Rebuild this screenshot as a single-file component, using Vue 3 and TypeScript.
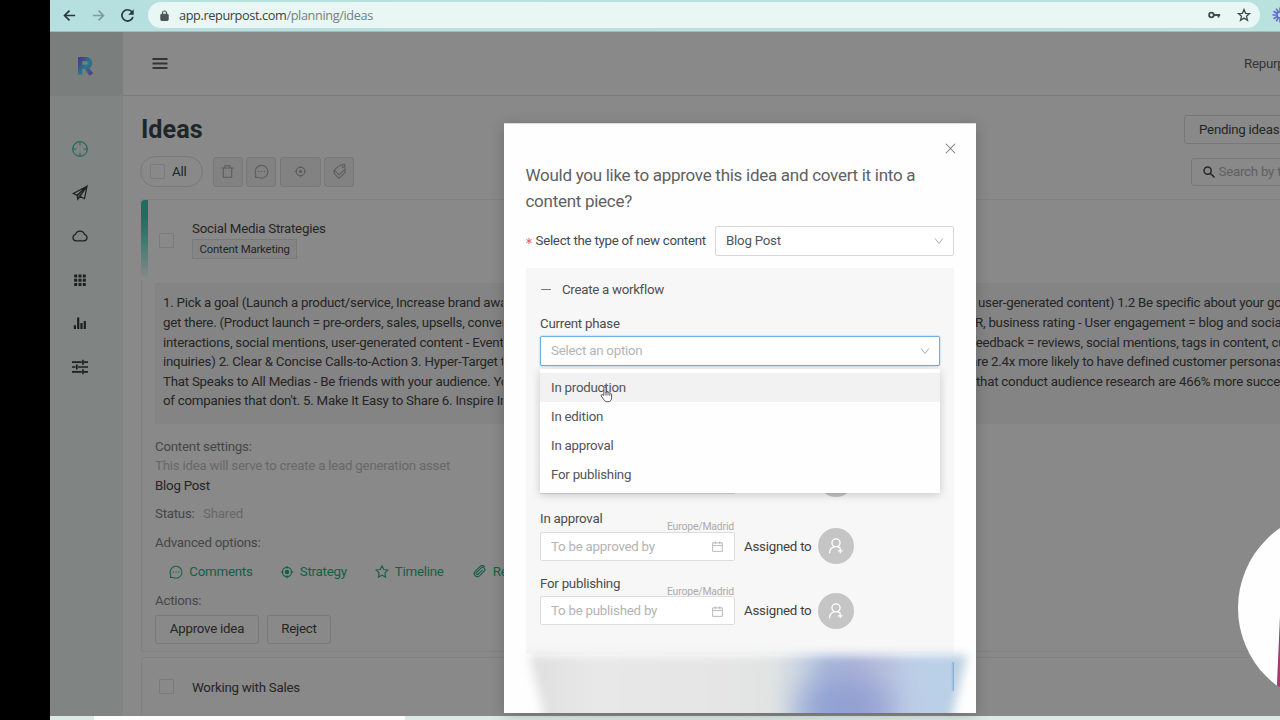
<script setup lang="ts">
interface Line { left: string; right: string; offset: number }

const lines: Line[] = [
  { left: '1. Pick a goal (Launch a product/service, Increase brand awareness', right: 'user-generated content) 1.2 Be specific about your goals', offset: 978 },
  { left: 'get there. (Product launch = pre-orders, sales, upsells, conversions', right: 'R, business rating - User engagement = blog and social media', offset: 975 },
  { left: 'interactions, social mentions, user-generated content - Event leads', right: 'feedback = reviews, social mentions, tags in content, customer', offset: 971.5 },
  { left: 'inquiries) 2. Clear & Concise Calls-to-Action 3. Hyper-Target the', right: 'are 2.4x more likely to have defined customer personas', offset: 970 },
  { left: 'That Speaks to All Medias - Be friends with your audience. You', right: 'that conduct audience research are 466% more successful', offset: 976 },
  { left: "of companies that don't. 5. Make It Easy to Share 6. Inspire Interaction", right: '', offset: 976 },
]
const options: string[] = ['In production', 'In edition', 'In approval', 'For publishing']
const phases = [
  { name: 'In approval', hint: 'To be approved by' },
  { name: 'For publishing', hint: 'To be published by' },
]
</script>

<template>
  <div class="screen">
    <header class="browser">
      <svg class="nav-icon" viewBox="0 0 16 16"><path d="M14 8H3M8 2.7 2.7 8 8 13.3" /></svg>
      <svg class="nav-icon faded" viewBox="0 0 16 16"><path d="M2 8h11M8 2.7 13.3 8 8 13.3" /></svg>
      <svg class="nav-icon" viewBox="0 0 16 16"><path d="M13.8 9.6A6 6 0 1 1 12.8 4.200" /><path class="solid" d="M14.600 1.200v6H8.800z" /></svg>
      <div class="address">
        <svg class="lock" viewBox="0 0 10 12"><rect x="1" y="4.6" width="8" height="6.8" rx="1" /><path d="M2.8 5V3.2a2.2 2.2 0 0 1 4.4 0V5" /></svg>
        <span class="url">app.repurpost.com<i>/planning/ideas</i></span>
        <svg class="key" viewBox="0 0 14 8"><circle cx="3.7" cy="4" r="2.5" /><path d="M6.3 4h6.8M11.3 4v2.6" /></svg>
        <svg class="bookmark" viewBox="0 0 14 14"><path d="m7 1.500 1.600 3.800 4 .3-3.100 2.700 1 4L7 10.100l-3.500 2.200 1-4L1.400 5.600l4-.3z" /></svg>
      </div>
      <svg class="extension" viewBox="0 0 16 16"><g><path v-for="n in 12" :key="n" d="M8 .5v4" :transform="`rotate(${n * 30} 8 8)`" /><circle cx="8" cy="8" r="3" /></g></svg>
    </header>

    <div class="app">
      <aside class="sidebar">
        <div class="brand">
          <svg viewBox="0 0 18 20">
            <defs><linearGradient id="brand" x1="0" y1="0" x2="1" y2="1"><stop offset="0" stop-color="#493d85" /><stop offset=".5" stop-color="#257d88" /><stop offset="1" stop-color="#55378a" /></linearGradient></defs>
            <path d="M3.200 18.700V3.200H9.300a3.700 3.700 0 0 1 0 7.600H3.200M8.300 10.500l6 8" fill="none" stroke="url(#brand)" stroke-width="4.300" />
          </svg>
        </div>
        <nav class="menu">
          <svg class="green" viewBox="0 0 16 16"><circle cx="8" cy="8" r="7.300" /><path d="M8 .7v3.600M8 11.700v3.600M.7 8h3.600M11.700 8h3.600" /></svg>
          <svg viewBox="0 0 16 16"><path d="M15 1.200 1.300 8.500l3.800 1.800L15 1.200l-2.500 12.500-4.600-2.400L15 1.200 5.100 10.300l.6 4 2.200-3" /><path class="fill" d="m5.100 10.300.5 4 2.200-3L15 1.200z" opacity=".5" /></svg>
          <svg viewBox="0 0 16 16"><path d="M4 12.800a3.200 3.200 0 0 1-.6-6.300A4.800 4.800 0 0 1 12.600 6.500a3.200 3.200 0 0 1-.6 6.300z" /></svg>
          <svg class="fill" viewBox="0 0 16 16"><path d="M2.200 2.500h3v3h-3zm4.300 0h3v3h-3zm4.300 0h3v3h-3zM2.200 6.700h3v3h-3zm4.300 0h3v3h-3zm4.300 0h3v3h-3zM2.200 10.900h3v3h-3zm4.300 0h3v3h-3zm4.300 0h3v3h-3z" /></svg>
          <svg class="fill" viewBox="0 0 16 16"><path d="M1.800 10.300h2.200v3.700H1.800zM5.100 2.600h2.200V14H5.100zM8.400 8h2.200v6H8.400zM11.700 6h2.200v8h-2.200z" /></svg>
          <svg class="sliders" viewBox="0 0 16 16"><path d="M0 3.200h9.800M12 3.200h4M0 8h3.500M6 8h10M0 12.800h9.800M12 12.800h4M11 .7v5M4.800 5.500v5M11 10.300v5" /></svg>
        </nav>
      </aside>

      <main class="main">
        <div class="topbar">
          <svg class="burger" viewBox="0 0 16 12"><path d="M.5 1h15M.5 5.500h15M.5 10h15" /></svg>
          <span class="account">Repurpost</span>
        </div>
        <div class="title-row">
          <h1>Ideas</h1>
          <button class="pending">Pending ideas</button>
        </div>
        <div class="toolbar">
          <label class="all"><span class="check"></span>All</label>
          <span class="tool trash"><svg viewBox="0 0 16 16"><path d="M1.500 4.200h13M3.500 4.200v10h9v-10M5.300 4V1.800h5.400V4" /></svg></span>
          <span class="tool chat"><svg viewBox="0 0 16 16"><path d="M1.800 14.300v-3.400A6.800 6.800 0 1 1 5 14.300z" /><path d="M4.200 8h1.300M7.400 8h1.300M10.600 8h1.300" /></svg></span>
          <span class="tool wide"><svg viewBox="0 0 16 16"><circle cx="8" cy="8" r="4.600" /><path d="M8 2v2M8 12v2M2 8h2M12 8h2" /><circle class="fill" cx="8" cy="8" r="1.700" /></svg></span>
          <span class="tool"><svg viewBox="0 0 16 16"><path d="m8.500 1.300 5-.8.500 5-6.500 6-5.200-5zM2.300 7v3.200l5.200 5 6.500-6V6" /><circle cx="11.500" cy="3.300" r=".5" /></svg></span>
          <div class="search"><svg viewBox="0 0 13 13"><circle cx="5" cy="5" r="3.900" /><path d="m8 8 4.500 4.500" /></svg><span>Search by title</span></div>
        </div>

        <section class="card">
          <div class="card-head">
            <span class="check"></span>
            <div class="heading"><div class="idea">Social Media Strategies</div><span class="tag">Content Marketing</span></div>
          </div>
          <div class="description">
            <div v-for="line in lines" :key="line.left" class="line">
              <span class="left">{{ line.left }}</span>
              <span class="right" :style="{ marginLeft: `${line.offset - 503}px` }">{{ line.right }}</span>
            </div>
          </div>
          <div class="settings">
            <div class="soft">Content settings:</div>
            <div class="muted">This idea will serve to create a lead generation asset</div>
            <div>Blog Post</div>
          </div>
          <div class="status"><span class="soft">Status:</span><span class="muted">Shared</span></div>
          <div class="advanced soft">Advanced options:</div>
          <div class="links">
            <span class="link comments"><svg viewBox="0 0 16 16"><path d="M1.800 14.300v-3.400A6.800 6.800 0 1 1 5 14.300z" /><path d="M4.200 8h1.300M7.400 8h1.300M10.600 8h1.300" /></svg>Comments</span>
            <span class="link strategy"><svg viewBox="0 0 16 16"><circle cx="8" cy="8" r="5.300" /><path d="M8 1v3M8 12v3M1 8h3M12 8h3" /><circle class="fill" cx="8" cy="8" r="2.600" /></svg>Strategy</span>
            <span class="link timeline"><svg viewBox="0 0 16 16"><path d="m8 .8 2 4.400 4.700.6-3.400 3.300.8 4.900L8 11.600 3.900 14l.8-4.900-3.400-3.300L6 5.200z" /></svg>Timeline</span>
            <span class="link related"><svg viewBox="0 0 16 16"><path d="m11 5.500-5 5a1.300 1.300 0 0 1-2-1.800l5.200-5.200a2.500 2.500 0 0 1 3.600 3.500L7.500 12.300a3.500 3.500 0 0 1-5-5L7.700 2.100a4.300 4.300 0 0 1 5.800 0" /></svg>Related</span>
          </div>
          <div class="actions-label soft">Actions:</div>
          <div class="actions"><button class="approve">Approve idea</button><button class="reject">Reject</button></div>
        </section>
        <section class="card next"><span class="check"></span><span>Working with Sales</span></section>
      </main>
    </div>
    <footer class="strip"><span></span></footer>

    <div class="camera"><i></i></div>

    <div class="modal">
      <svg class="close" viewBox="0 0 12 12"><path d="m1 .8 10 10.400M11 .8 1 11.200" /></svg>
      <h2>Would you like to approve this idea and covert it into a<br />content piece?</h2>
      <div class="type-row">
        <svg class="star" viewBox="0 0 6 6"><path d="M3 0v6M.4 1.500l5.200 3M5.600 1.500l-5.200 3" /></svg><label>Select the type of new content</label>
        <div class="select type-select">Blog Post<svg class="chevron" viewBox="0 0 10 10"><path d="m1 2.500 4 5 4-5" /></svg></div>
      </div>
      <div class="workflow">
        <div class="workflow-head"><i></i>Create a workflow</div>
        <div class="label">Current phase</div>
        <div class="select phase-select"><span>Select an option</span><svg class="chevron" viewBox="0 0 10 10"><path d="m1 2.500 4 5 4-5" /></svg></div>
        <div class="covered"><span class="covered-input"></span><span class="avatar"></span></div>
        <div v-for="phase in phases" :key="phase.name" class="phase">
          <div class="phase-top"><span>{{ phase.name }}</span><small>Europe/Madrid</small></div>
          <div class="phase-row">
            <div class="date">{{ phase.hint }}<svg viewBox="0 0 12 12"><path d="M.7 2h10.600v9.300H.7zM.7 5h10.600M3.500.5v3M8.500.5v3" /></svg></div>
            <span class="assigned">Assigned to</span>
            <span class="avatar"><svg viewBox="0 0 20 20"><circle cx="10" cy="6.500" r="4.500" /><path d="M2.800 18c0-4 2-6 5-7M12 11c1.200.3 2 .7 2.800 1.400M14.800 12.700v5.400M12 15.400h5.500" /></svg></span>
          </div>
        </div>
      </div>
      <div class="dropdown">
        <div v-for="(option, i) in options" :key="option" class="option" :class="{ active: i === 0 }">{{ option }}</div>
      </div>
    </div>
    <div class="frost"><div class="soften"><div class="haze"></div></div><div class="glow"></div><i></i></div>
    <svg class="cursor" viewBox="0 0 14 18"><path d="M4.200 10V2.200c0-1.800 2.300-1.800 2.300 0v5-.7c.8-.8 2-.4 2.100.5.8-.6 1.900-.2 2 .8.900-.4 1.900.1 1.900 1.100v3.500c0 2.800-1.400 4.400-3.900 4.400-2.500 0-3.500-.8-4.600-2.500L1.300 10.600c-.6-1.100.8-2 1.700-1.200z" /><path d="M6.500 7v3M8.600 7.500V10M10.600 8.300v2" /></svg>
  </div>
</template>

<style>
body { margin: 0; overflow: hidden; }
</style>

<style scoped>
* { box-sizing: border-box; }
.screen { position: relative; width: 1280px; height: 720px; overflow: hidden; background: #000; padding-left: 50px; font: 13.300px/20px Roboto, sans-serif; letter-spacing: -0.240px; color: #252525; }
svg { display: block; flex: none; fill: none; stroke: currentColor; overflow: visible; }
button { font: inherit; letter-spacing: inherit; color: inherit; background: none; padding: 0; }
.browser { height: 32px; background: linear-gradient(90deg, #b6dfdf, #b9e1de); display: flex; align-items: center; padding: 0 0 1px 12px; color: #26383a; border-bottom: 1px solid #9fbdbc; }
.nav-icon { width: 15px; height: 15px; margin-right: 14px; stroke-width: 1.8; }
.nav-icon.faded { color: #809b9b; }
.nav-icon .solid { fill: currentColor; stroke: none; }
.address { flex: none; height: 26px; width: 1112px; margin-left: -1px; padding: 0 9.500px 0 12px; border-radius: 13px; background: #e8f6f4; display: flex; align-items: center; }
.lock { width: 9px; height: 11px; color: #4b5656; stroke-width: 1.3; }
.lock rect { fill: currentColor; }
.url { margin-left: 10px; flex: 1; font: 12.700px/20px "Open Sans", sans-serif; letter-spacing: -0.370px; color: #384242; }
.url i { font-style: normal; color: #758180; }
.key { width: 13px; height: 8px; margin-right: 16px; stroke-width: 2; color: #414d4d; }
.bookmark { width: 14px; height: 14px; stroke-width: 1.3; color: #414d4d; }
.extension { width: 16px; height: 16px; margin-left: 12px; color: #5b64d4; stroke-width: 1.5; }
.app { height: 684px; display: flex; background: #898989; overflow: hidden; }
.sidebar { width: 73px; flex: none; background: #808584; }
.brand { height: 64px; padding: 24px 0 0 27px; background: #7a7f7d; }
.brand svg { width: 18px; height: 20px; }
.menu { padding: 45px 0 0 22px; display: flex; flex-direction: column; gap: 27.600px; color: #1c2120; }
.menu svg { width: 16px; height: 16px; stroke-width: 1.2; }
.menu .green { color: #23695a; }
.fill { fill: currentColor; stroke: none; }
.menu .sliders { stroke-width: 1.7; }
.main { flex: none; width: 1157px; overflow: hidden; }
.topbar { height: 64px; border-bottom: 1px solid #7b7b7b; display: flex; align-items: center; padding-left: 29px; color: #343434; }
.burger { width: 16px; height: 12px; stroke-width: 2; }
.account { margin-left: 1076px; white-space: nowrap; }
.title-row { height: 60px; padding: 19px 0 0 18px; display: flex; justify-content: space-between; }
h1 { margin: 0; font: 700 25.200px/29px Roboto, sans-serif; letter-spacing: 0; color: #1e262c; }
.pending { width: 130px; height: 29px; margin-right: -34px; padding-left: 14px; text-align: left; white-space: nowrap; border: 1px solid #777; border-radius: 3px; }
.toolbar { display: flex; height: 31px; align-items: center; padding-left: 17px; }
.toolbar > * { flex: none; }
.all { width: 63px; height: 31px; border: 1px solid #797979; border-radius: 16px; display: flex; align-items: center; gap: 7px; padding-left: 9px; margin-right: 9.500px; }
.check { width: 15px; height: 15px; border: 1px solid #7a7a7a; border-radius: 1px; flex: none; }
.tool { width: 30px; height: 30px; border: 1px solid #777; border-radius: 3px; background: #828282; color: #5b5b5b; display: flex; align-items: center; justify-content: center; margin-right: 3.500px; }
.tool svg { width: 15px; height: 15px; stroke-width: 1.1; }
.tool.wide { width: 41px; }
.search { margin-left: 833px; width: 130px; height: 28px; border: 1px solid #777; border-radius: 3px; display: flex; align-items: center; gap: 4px; padding-left: 11px; color: #606060; white-space: nowrap; }
.search svg { width: 12px; height: 12px; color: #272727; stroke-width: 1.6; }
.card { position: relative; margin: 12px 0 0 18px; width: 1300px; height: 453px; border: 1px solid #818181; border-right: 0; border-radius: 3px; padding-left: 13px; }
.card::before { content: ""; position: absolute; left: -1px; top: 0; width: 7px; height: 80px; border-radius: 4px 0 0; background: linear-gradient(#226c5f 20%, #38776d 45%, #898989); }
.card-head { height: 83px; display: flex; padding: 19px 0 0 4px; }
.card-head .check { margin-top: 14px; }
.heading { margin-left: 18px; }
.idea { height: 20px; white-space: nowrap; }
.tag { display: block; width: 105px; height: 20px; border: 1px solid #7a7a7a; padding-left: 6.500px; font-size: 11.400px; letter-spacing: -0.200px; line-height: 18px; background: #858585; white-space: nowrap; }
.description { height: 141px; background: #848484; padding: 10.400px 0 0 8px; }
.line { height: 19.600px; line-height: 19.600px; display: flex; white-space: nowrap; }
.left { width: 340px; flex: none; overflow: hidden; }
.settings { padding-top: 12.500px; line-height: 19.700px; }
.soft { color: #464646; }
.muted { color: #686868; }
.status { padding-top: 8.300px; display: flex; gap: 8.500px; }
.advanced { margin-top: 9px; }
.links { display: flex; margin-top: 9px; padding-left: 14px; color: #145f46; height: 20px; }
.link { display: flex; align-items: center; flex: none; }
.link svg { width: 14px; height: 14px; margin-right: 6.300px; stroke-width: 1.25; }
.comments { width: 110.500px; }
.strategy { width: 95px; }
.timeline { width: 98px; }
.actions-label { margin-top: 9px; }
.actions { display: flex; gap: 8px; margin-top: 4px; }
.actions button { height: 29px; border: 1px solid #797979; border-radius: 3px; }
.approve { width: 104px; }
.reject { width: 64px; }
.next { margin-top: 5px; height: 70px; padding: 20px 0 0 17px; display: flex; gap: 18px; }
.next::before { display: none; }
.next .check { margin-top: 1px; }
.strip { position: relative; height: 4px; background: #dceae5; padding-left: 44px; }
.strip span { display: block; width: 311px; height: 4px; background: #fdfdfd; }
.camera { position: absolute; left: 1238px; top: 511px; width: 194px; height: 194px; border-radius: 50%; background: #fefefe; overflow: hidden; }
.camera i { position: absolute; left: 38px; top: 105px; width: 20px; height: 90px; background: #a13c72; clip-path: polygon(20% 0, 100% 0, 100% 100%, 0 100%); }
.modal { position: absolute; left: 504px; top: 123px; width: 472px; height: 590px; padding: 39px 22px 0; background: #fefefe; border-top: 1px solid #ddd; box-shadow: 0 3px 14px #0003; color: #555; }
.close { position: absolute; right: 20px; top: 19px; width: 11px; height: 11px; color: #777; stroke-width: 1.1; }
h2 { margin: 0 0 0 -.5px; font: 400 17px/25.600px Roboto, sans-serif; letter-spacing: -0.280px; color: #616161; white-space: nowrap; }
.type-row { margin-top: 12px; height: 29px; display: flex; align-items: center; }
.star { color: #e06068; width: 6px; height: 6px; margin-right: 3.500px; stroke-width: 1; }
.type-row label { color: #3f4b54; width: 180px; white-space: nowrap; letter-spacing: -0.270px; }
.select { background: #fff; border: 1px solid #d7d7d7; border-radius: 2px; height: 30px; display: flex; align-items: center; justify-content: space-between; padding: 0 9px 0 10px; }
.type-select { width: 239px; flex: none; padding-top: 1px; }
.chevron { width: 10px; height: 10px; color: #aaa; stroke-width: 1; }
.workflow { margin-top: 13px; height: 386px; background: #f7f7f7; padding: 11px 14px 0; }
.workflow-head { display: flex; align-items: center; height: 21px; color: #505050; letter-spacing: -0.290px; }
.workflow-head i { width: 10px; height: 1px; background: #777; margin: 0 11px 0 1px; }
.label { margin-top: 14px; height: 22px; line-height: 20px; color: #4d4d4d; }
.phase-select { width: 400px; border-color: #72aede; box-shadow: 0 0 2px #7bb7e8; color: #b4b4b4; }
.covered { height: 143px; padding-top: 99px; display: flex; }
.covered-input { width: 195px; height: 29px; border: 1px solid #d9d9d9; }
.covered .avatar { margin: -4px 0 0 83px; }
.phase { height: 64.500px; }
.phase-top { display: flex; height: 22px; width: 195px; justify-content: space-between; color: #4d4d4d; }
.phase-top small { font-size: 10.400px; letter-spacing: -0.150px; line-height: 12px; padding-top: 12px; color: #aaa; padding-right: 1px; }
.phase-row { display: flex; align-items: center; height: 30px; }
.date { width: 195px; height: 29px; border: 1px solid #ddd; border-radius: 2px; background: #fff; color: #b3b3b3; padding: 1px 11px 0 10px; display: flex; align-items: center; justify-content: space-between; }
.date svg { width: 11px; height: 11px; stroke-width: 1; }
.assigned { margin-left: 9px; width: 74px; padding-top: 1px; white-space: nowrap; color: #404040; }
.avatar { width: 36px; height: 36px; flex: none; border-radius: 50%; background: #c5c5c5; color: #fff; display: flex; align-items: center; justify-content: center; }
.avatar svg { width: 18px; height: 18px; stroke-width: 1.500; }
.dropdown { position: absolute; left: 36px; top: 245px; width: 400px; height: 124px; padding-top: 4px; background: #fefefe; box-shadow: 0 2px 9px #00000030; }
.option { height: 29.100px; padding-left: 11px; line-height: 29px; color: #555; }
.option.active { background: #f2f2f2; }
.frost { position: absolute; left: 504px; top: 640px; width: 472px; height: 73px; overflow: hidden; }
.soften { height: 120px; filter: blur(5px); }
.haze { width: 438px; height: 110px; margin: 0 0 0 25px; transform: translateY(15px); background: linear-gradient(90deg, #dfdfdf, #e8e8e8 15%, #e5e5e5 45%, #e0e4e3 56%, #c9d3e1 62%, #a9b8da 68%, #abb3d8 74%, #b6bddb 80%, #bccee6 87%, #bad0e8 94%, #bccfdf); clip-path: polygon(0 0, 100% 0, 96% 65%, 94% 100%, 6% 100%, 4% 65%); }
.glow { position: absolute; left: 290px; top: 38px; width: 100px; height: 60px; border-radius: 50%; background: #8294cf; filter: blur(14px); opacity: .6; }
.frost i { position: absolute; left: 447px; top: 22px; width: 3px; height: 29px; background: linear-gradient(90deg, transparent, #86abd8); }
.cursor { position: absolute; left: 600px; top: 386px; width: 13px; height: 17px; color: #444; fill: #fff; stroke-width: 1; }
</style>
